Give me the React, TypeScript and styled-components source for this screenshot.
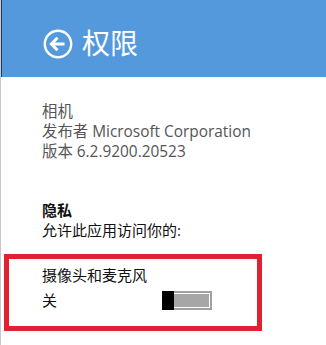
import React from "react";
import styled, { createGlobalStyle } from "styled-components";

const Global = createGlobalStyle`
  html, body { margin: 0; padding: 0; background: #ffffff; }
  body { font-family: "Open Sans", "Noto Sans CJK SC", sans-serif; }
`;

const Page = styled.div`
  width: 326px;
  height: 345px;
  overflow: hidden;
  background: #ffffff;
  border-left: 1px solid #c8c8c8;
  box-sizing: border-box;
  position: relative;
`;

const Header = styled.header`
  height: 77px;
  background: #5599dd;
  border-left: 2px solid #1f3e66;
  margin-left: -1px;
  display: flex;
  align-items: center;
  padding-left: 41px;
  padding-top: 10px;
  box-sizing: border-box;
  gap: 9px;
`;

const BackButton = styled.div`
  width: 30px;
  height: 30px;
  display: flex;
  align-items: center;
  justify-content: center;
`;

const Title = styled.h1`
  margin: 0;
  font-family: "Noto Sans CJK SC", sans-serif;
  font-weight: 400;
  font-size: 28px;
  line-height: 1;
  color: #ffffff;
  margin-top: -3px;
`;

const Content = styled.div`
  padding-left: 41px;
  padding-top: 25px;
`;

const InfoLine = styled.div`
  font-size: 15.4px;
  line-height: 20px;
  color: #555555;
  white-space: nowrap;
`;

const Section = styled.div`
  margin-top: 38px;
`;

const SectionTitle = styled.div`
  font-family: "Noto Sans CJK SC", sans-serif;
  font-weight: 700;
  font-size: 15px;
  line-height: 20px;
  color: #111111;
`;

const SectionText = styled.div`
  font-size: 15px;
  line-height: 20px;
  color: #111111;
`;

const Highlight = styled.div`
  margin-top: 14px;
  margin-left: 3px;
  width: 258px;
  height: 77px;
  border: 5px solid #e0222e;
  box-sizing: border-box;
  padding: 6px 0 0 33px;
`;

const SettingName = styled.div`
  font-size: 15px;
  line-height: 20px;
  color: #111111;
`;

const SettingRow = styled.div`
  display: flex;
  align-items: center;
  margin-top: 5px;
`;

const SettingState = styled.div`
  font-size: 15px;
  line-height: 20px;
  color: #111111;
  width: 120px;
`;

const Toggle = styled.div`
  position: relative;
  width: 50px;
  height: 19px;
  border: 2px solid #a0a0a0;
  box-sizing: border-box;
  background: #ffffff;
  padding: 1px;
`;

const Track = styled.div`
  width: 100%;
  height: 100%;
  background: #a6a6a6;
`;

const Thumb = styled.div`
  position: absolute;
  left: -2px;
  top: -2px;
  width: 12px;
  height: 19px;
  background: #000000;
`;

const BackIcon = () => (
  <svg width="30" height="30" viewBox="0 0 30 30">
    <circle cx="15" cy="15" r="13.2" fill="none" stroke="#ffffff" strokeWidth="2.4" />
    <path d="M8.5 15 H21.5" stroke="#ffffff" strokeWidth="3" fill="none" />
    <path d="M14.5 8.8 L8.4 15 L14.5 21.2" stroke="#ffffff" strokeWidth="3" fill="none" strokeLinejoin="miter" />
  </svg>
);

export default function App() {
  return (
    <>
      <Global />
      <Page>
        <Header>
          <BackButton>
            <BackIcon />
          </BackButton>
          <Title>权限</Title>
        </Header>
        <Content>
          <InfoLine>相机</InfoLine>
          <InfoLine>发布者 Microsoft Corporation</InfoLine>
          <InfoLine>版本 6.2.9200.20523</InfoLine>
          <Section>
            <SectionTitle>隐私</SectionTitle>
            <SectionText>允许此应用访问你的:</SectionText>
          </Section>
        </Content>
        <Highlight>
          <SettingName>摄像头和麦克风</SettingName>
          <SettingRow>
            <SettingState>关</SettingState>
            <Toggle>
              <Track />
              <Thumb />
            </Toggle>
          </SettingRow>
        </Highlight>
      </Page>
    </>
  );
}
